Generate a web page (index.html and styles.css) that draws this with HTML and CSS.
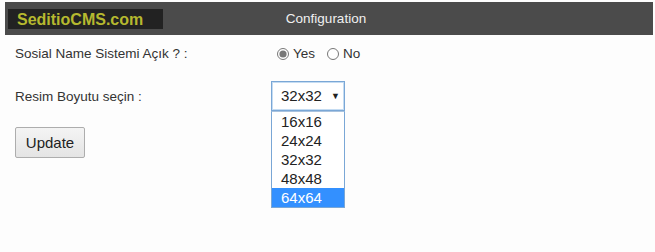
FILE: index.html
```html
<!DOCTYPE html>
<html lang="tr">
<head>
    <meta charset="UTF-8">
    <title>SeditioCMS - Configuration</title>
    <link rel="stylesheet" href="styles.css">
</head>
<body>
    <header class="topbar">
        <div class="logo">SeditioCMS.com</div>
        <div class="title">Configuration</div>
        <div></div>
    </header>
    <form class="config">
        <div class="row">
            <label class="label">Sosial Name Sistemi Açık ? :</label>
            <div class="field">
                <label class="radio"><input type="radio" name="social" checked> Yes</label>
                <label class="radio"><input type="radio" name="social"> No</label>
            </div>
        </div>
        <div class="row row-size">
            <label class="label">Resim Boyutu seçin :</label>
            <div class="field">
                <div class="dropdown">
                    <div class="select-box">32x32 <span class="arrow">&#9660;</span></div>
                    <ul class="options">
                        <li>16x16</li>
                        <li>24x24</li>
                        <li>32x32</li>
                        <li>48x48</li>
                        <li class="active">64x64</li>
                    </ul>
                </div>
            </div>
        </div>
        <div class="actions">
            <button type="button" class="btn">Update</button>
        </div>
    </form>
</body>
</html>
```
FILE: styles.css
```css
html, body {
    height: 100%;
}
body {
    margin: 0;
    background: #fdfdfd;
    font-family: "Liberation Sans", Arial, sans-serif;
    font-size: 13.5px;
    color: #333;
}
.topbar {
    display: grid;
    grid-template-columns: 1fr auto 1fr;
    align-items: center;
    height: 33px;
    margin: 2px 2px 0 5px;
    background: #4b4b4b;
}
.logo {
    justify-self: start;
    width: 146px;
    height: 20px;
    margin-left: 3px;
    padding-left: 9px;
    background: #222;
    color: #b6b92f;
    font-weight: bold;
    font-size: 16px;
    line-height: 21px;
}
.title {
    color: #f0f0f0;
    font-size: 13.5px;
    padding-right: 6px;
}
.config {
    padding: 11px 0 0 15px;
}
.row {
    display: grid;
    grid-template-columns: 256px auto;
    align-items: center;
}
.row-size {
    margin-top: 20px;
}
.field {
    display: flex;
    align-items: center;
}
.radio {
    display: flex;
    align-items: center;
    margin-right: 6px;
}
.radio input {
    margin: 0 4px 0 6px;
    width: 12px;
    height: 12px;
    accent-color: #777;
}
.dropdown {
    position: relative;
    width: 74px;
}
.select-box {
    height: 28px;
    border: 1px solid #7aa7d6;
    box-shadow: inset 0 0 0 1px #c5dcf2;
    padding-left: 9px;
    font-size: 15px;
    line-height: 28px;
    color: #222;
    background: #fff;
}
.arrow {
    font-size: 9px;
    margin-left: 5px;
    vertical-align: 2px;
}
.options {
    position: absolute;
    top: 30px;
    left: 0;
    z-index: 2;
    width: 72px;
    margin: 0;
    padding: 0;
    list-style: none;
    border: 1px solid #7aa7d6;
    border-top: 1px solid #a9c3df;
    background: #fff;
    font-size: 15px;
}
.options li {
    height: 19px;
    line-height: 19px;
    padding-left: 9px;
    color: #222;
}
.options li.active {
    background: #3390ff;
    color: #fff;
}
.actions {
    margin-top: 16px;
}
.btn {
    width: 70px;
    height: 31px;
    border: 1px solid #adadad;
    border-radius: 2px;
    background: linear-gradient(#f4f4f4, #e4e4e4);
    font-family: "Liberation Sans", Arial, sans-serif;
    font-size: 15px;
    color: #222;
}
```
